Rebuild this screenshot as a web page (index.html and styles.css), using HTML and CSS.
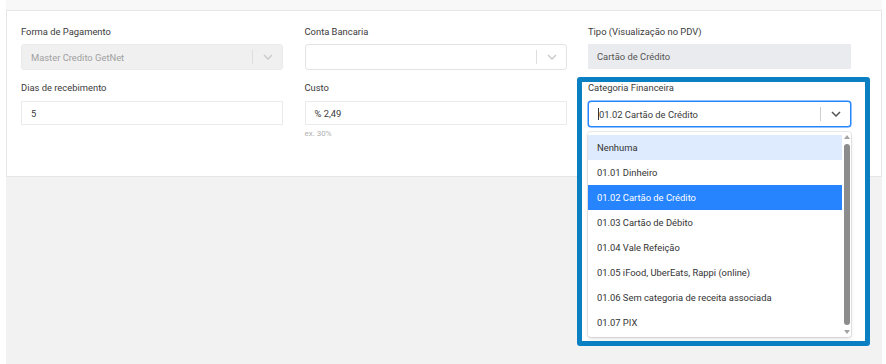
FILE: index.html
```html
<!DOCTYPE html>
<html>
<head>
  <title>Forma de Pagamento</title>
  <link rel="stylesheet" href="styles.css">
</head>
<body>
  <div class="page">
    <div class="topbar"></div>
    <div class="card">
      <div class="grid">
        <!-- Row 1 -->
        <div class="field">
          <label>Forma de Pagamento</label>
          <div class="select disabled">
            <span class="value">Master Credito GetNet</span>
            <span class="sep"></span>
            <svg class="chev" width="10" height="6" viewBox="0 0 10 6"><polyline points="1,1 5,5 9,1" fill="none" stroke="currentColor" stroke-width="1.3"/></svg>
          </div>
        </div>
        <div class="field">
          <label>Conta Bancaria</label>
          <div class="select">
            <span class="value"></span>
            <span class="sep"></span>
            <svg class="chev" width="10" height="6" viewBox="0 0 10 6"><polyline points="1,1 5,5 9,1" fill="none" stroke="currentColor" stroke-width="1.3"/></svg>
          </div>
        </div>
        <div class="field">
          <label>Tipo (Visualização no PDV)</label>
          <div class="readonly">Cartão de Crédito</div>
        </div>

        <!-- Row 2 -->
        <div class="field">
          <label>Dias de recebimento</label>
          <div class="input">5</div>
        </div>
        <div class="field">
          <label>Custo</label>
          <div class="input">% 2,49</div>
          <div class="hint">ex. 30%</div>
        </div>
        <div class="field highlight">
          <label>Categoria Financeira</label>
          <div class="select focused">
            <span class="value"><span class="caret"></span>01.02 Cartão de Crédito</span>
            <span class="sep"></span>
            <svg class="chev" width="10" height="6" viewBox="0 0 10 6"><polyline points="1,1 5,5 9,1" fill="none" stroke="currentColor" stroke-width="1.5"/></svg>
          </div>
          <div class="menu">
            <ul class="options">
              <li class="hover">Nenhuma</li>
              <li>01.01 Dinheiro</li>
              <li class="selected">01.02 Cartão de Crédito</li>
              <li>01.03 Cartão de Débito</li>
              <li>01.04 Vale Refeição</li>
              <li>01.05 iFood, UberEats, Rappi (online)</li>
              <li>01.06 Sem categoria de receita associada</li>
              <li>01.07 PIX</li>
            </ul>
            <div class="scrollbar">
              <span class="arrow up"></span>
              <span class="thumb"></span>
              <span class="arrow down"></span>
            </div>
          </div>
        </div>
      </div>
    </div>
  </div>
</body>
</html>
```

FILE: styles.css
```css
/* Global Styles */
body {
  margin: 0;
  background-color: #fff;
  font-family: Roboto, "Liberation Sans", Arial, sans-serif;
  font-size: 9.4px;
  color: #3a3a3a;
}
.page {
  margin: 0 4px 0 6px;
  height: 364px;
  background-color: #f2f2f2;
}
.topbar {
  height: 10px;
  background-color: #f8f8f8;
}
.card {
  background-color: #fff;
  border: 1px solid #e6e6e6;
  height: 167px;
  box-sizing: border-box;
  padding: 15px 30px 0 14px;
}
.grid {
  display: grid;
  grid-template-columns: 262px 262px 263px;
  column-gap: 21.5px;
  row-gap: 12px;
}
.field label {
  display: block;
  line-height: 12px;
  margin-bottom: 6px;
  color: #3a3a3a;
}
.field:nth-child(n+4) label {
  margin-bottom: 7px;
}

/* Selects and inputs */
.select {
  display: flex;
  align-items: center;
  height: 26px;
  box-sizing: border-box;
  border: 1px solid #e3e3e3;
  border-radius: 3px;
  background-color: #fff;
  padding-left: 9px;
}
.select .value {
  flex: 1;
  display: flex;
  align-items: center;
}
.select .sep {
  width: 1px;
  height: 14px;
  background-color: #dedede;
}
.select .chev {
  margin: 0 9px 0 10px;
  color: #c8c8c8;
}
.select.disabled {
  background-color: #f0f0f0;
  border-color: #ebebeb;
  color: #a0a0a0;
}
.select.focused {
  border-color: #2684ff;
  box-shadow: 0 0 0 0.5px #2684ff;
  color: #3a3a3a;
}
.select.focused .sep {
  background-color: #cfcfcf;
}
.select.focused .chev {
  color: #555;
}
.caret {
  display: inline-block;
  width: 1px;
  height: 12px;
  background-color: #333;
}
.readonly {
  height: 25px;
  line-height: 25px;
  padding-left: 9px;
  background-color: #e9ebee;
  color: #555;
}
.input {
  height: 24px;
  line-height: 23px;
  box-sizing: border-box;
  border: 1px solid #ebebeb;
  padding-left: 9px;
  color: #3a3a3a;
}
.hint {
  margin-top: 4px;
  font-size: 8px;
  color: #b0b0b0;
}

/* Highlighted field with open menu */
.highlight {
  position: relative;
  z-index: 1;
}
.highlight::before {
  content: "";
  position: absolute;
  left: -11px;
  right: -19px;
  top: -5px;
  height: 269px;
  box-sizing: border-box;
  border: 5px solid #0a80c2;
  border-radius: 3px;
  background-color: #fff;
  z-index: -1;
}
.menu {
  position: absolute;
  top: 50px;
  left: 0;
  right: 0;
  height: 205px;
  display: flex;
  background-color: #fff;
  border-radius: 3px;
  box-shadow: 0 0 0 1px rgba(0, 0, 0, 0.08), 0 2px 4px rgba(0, 0, 0, 0.12);
}
.options {
  list-style: none;
  margin: 0;
  padding: 3px 0 2px;
  flex: 1;
}
.options li {
  height: 25px;
  line-height: 25px;
  padding-left: 9px;
  color: #333;
}
.options li.hover {
  background-color: #deebff;
}
.options li.selected {
  background-color: #2684ff;
  color: #fff;
}
.scrollbar {
  width: 9px;
  display: flex;
  flex-direction: column;
  align-items: center;
  padding: 3px 0;
  box-sizing: border-box;
}
.scrollbar .arrow {
  width: 0;
  height: 0;
  border-left: 3px solid transparent;
  border-right: 3px solid transparent;
}
.scrollbar .up {
  border-bottom: 4px solid #a3a3a3;
}
.scrollbar .down {
  border-top: 4px solid #a3a3a3;
}
.scrollbar .thumb {
  flex: 1;
  width: 6px;
  margin: 5px 0 5px;
  border-radius: 3px;
  background-color: #8c8c8c;
}
```
